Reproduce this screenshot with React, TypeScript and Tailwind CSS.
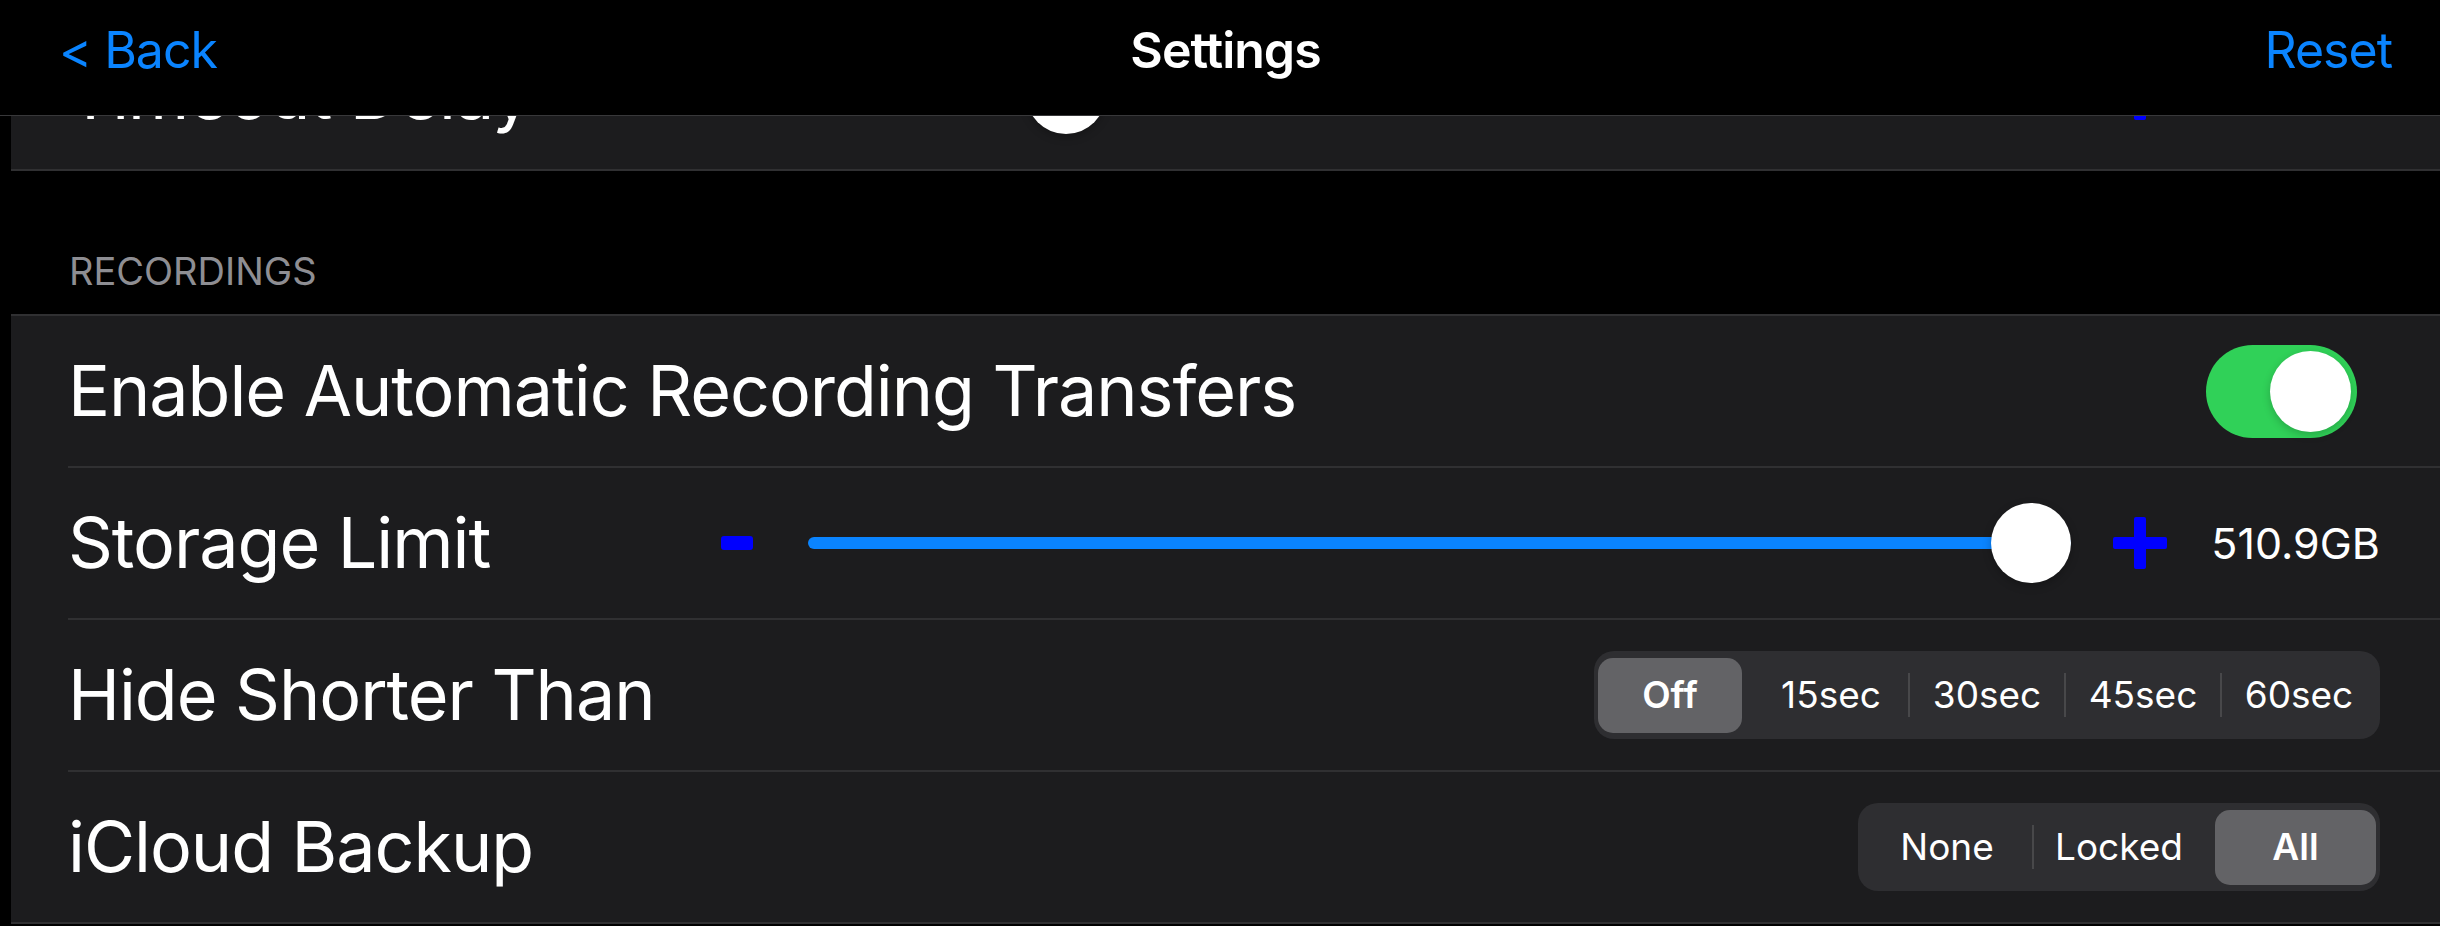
import React from "react";

// Settings screen of a recorder app (dark iOS look)

interface Segment {
  options: string[];
  selected: number;
}

const Minus = () => (
  <svg width="32" height="14" viewBox="0 0 32 14" aria-label="Decrease" className="shrink-0">
    <rect x="0" y="0" width="32" height="14" rx="3" fill="#0000ff" />
  </svg>
);

const Plus = () => (
  <svg width="54" height="52" viewBox="0 0 54 52" aria-label="Increase" className="shrink-0">
    <rect x="0" y="20" width="54" height="12" rx="2" fill="#0000ff" />
    <rect x="21" y="0" width="12" height="52" rx="2" fill="#0000ff" />
  </svg>
);

const Row = ({ label, last, children }: { label: string; last?: boolean; children: React.ReactNode }) => (
  <div className="pl-[57px]">
    <div
      className={
        last
          ? "flex h-[150px] items-center pr-[60px]"
          : "flex h-[152px] items-center border-b-2 border-[#303032] pr-[60px]"
      }
    >
      <span className="w-[653px] shrink-0 whitespace-nowrap text-[70px] leading-none tracking-[-0.015em] text-white">
        {label}
      </span>
      {children}
    </div>
  </div>
);

const SliderControls = ({ pct, value, full }: { pct: number; value: string; full?: boolean }) => (
  <>
    <Minus />
    <div className="relative ml-[55px] flex h-[80px] flex-1 items-center">
      <div className="flex h-[12px] w-full overflow-hidden rounded-full bg-[#3a3a3c]">
        <div className="h-full bg-[#0a84ff]" style={{ width: full ? "100%" : `${pct}%` }} />
      </div>
      <div
        className="absolute top-0 h-[80px] w-[80px] rounded-full bg-white shadow-[0_3px_8px_rgba(0,0,0,0.25)]"
        style={{ left: `calc(${pct}% - ${pct * 0.8}px)` }}
      />
    </div>
    <div className="ml-[42px]">
      <Plus />
    </div>
    <span className="ml-[44px] w-[169px] shrink-0 text-right text-[43px] leading-none text-white">
      {value}
    </span>
  </>
);

const Toggle = () => (
  <div className="ml-auto mr-[23px] flex h-[93px] w-[151px] items-center justify-end rounded-full bg-[#30d158] p-[6px]">
    <div className="h-[81px] w-[81px] rounded-full bg-white shadow-[0_3px_8px_rgba(0,0,0,0.2)]" />
  </div>
);

const Segmented = ({ options, selected, width }: Segment & { width: string }) => (
  <div className="ml-auto flex h-[88px] items-center rounded-[20px] bg-[#2e2e31] px-[4px]">
    {options.map((opt, i) => (
      <React.Fragment key={opt}>
        {i > 0 && (
          <div
            className={
              i === selected || i - 1 === selected
                ? "h-[44px] w-[2px] shrink-0 bg-transparent"
                : "h-[44px] w-[2px] shrink-0 bg-[#48484a]"
            }
          />
        )}
        <div className={`flex h-[75px] shrink-0 ${width}`}>
          {i === selected ? (
            <div
              className={
                i === 0
                  ? "mr-[10px] flex flex-1 items-center justify-center rounded-[15px] bg-[#636366] text-[37px] font-semibold text-white"
                  : i === options.length - 1
                    ? "ml-[9px] flex flex-1 items-center justify-center rounded-[15px] bg-[#636366] text-[37px] font-semibold text-white"
                    : "mx-[5px] flex flex-1 items-center justify-center rounded-[15px] bg-[#636366] text-[37px] font-semibold text-white"
              }
            >
              {opt}
            </div>
          ) : (
            <div className="flex flex-1 items-center justify-center text-[37px] font-normal text-white">{opt}</div>
          )}
        </div>
      </React.Fragment>
    ))}
  </div>
);

export default function App() {
  return (
    <div className="relative h-[926px] w-full overflow-hidden bg-black font-['Inter','Liberation_Sans',sans-serif]">
      {/* Nav bar, lies over the scrolled list */}
      <header className="absolute inset-x-0 top-0 z-10 h-[116px] border-b border-[#38383a] bg-black">
        <div className="grid grid-cols-3 pl-[59px] pr-[48px] pt-[25px] text-[50px] leading-[50px] tracking-[-0.02em]">
          <span className="justify-self-start text-[#0a84ff]">&lt; Back</span>
          <span className="justify-self-center font-semibold text-white">Settings</span>
          <span className="justify-self-end text-[#0a84ff]">Reset</span>
        </div>
      </header>

      <div className="pt-[17px]">
        {/* Previous section, scrolled under the nav bar */}
        <section className="ml-[11px] border-y-2 border-[#303032] bg-[#1c1c1e]">
          <Row label="Timeout Delay" last>
            <SliderControls pct={18.4} value="Never" />
          </Row>
        </section>

        <div className="flex h-[143px] items-end pb-[24px] pl-[69px]">
          <span className="text-[38px] leading-[38px] text-[#8e8e93]">RECORDINGS</span>
        </div>

        <section className="ml-[11px] border-y-2 border-[#303032] bg-[#1c1c1e]">
          <Row label="Enable Automatic Recording Transfers">
            <Toggle />
          </Row>
          <Row label="Storage Limit">
            <SliderControls pct={100} value="510.9GB" full />
          </Row>
          <Row label="Hide Shorter Than">
            <Segmented options={["Off", "15sec", "30sec", "45sec", "60sec"]} selected={0} width="w-[154px]" />
          </Row>
          <Row label="iCloud Backup" last>
            <Segmented options={["None", "Locked", "All"]} selected={2} width="w-[170px]" />
          </Row>
        </section>
      </div>
    </div>
  );
}
